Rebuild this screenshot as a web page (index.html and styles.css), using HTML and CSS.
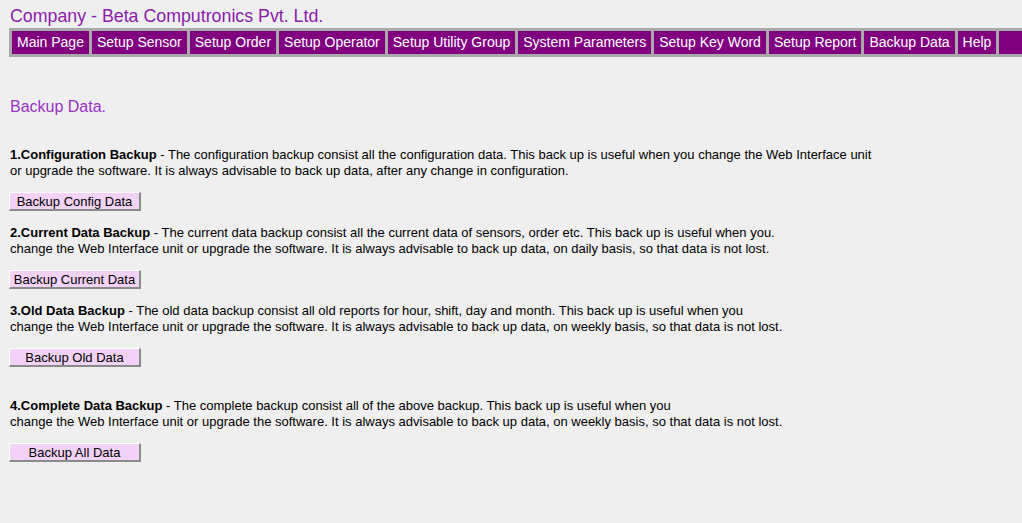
FILE: index.html
```html
<!DOCTYPE html>
<html>
<head>
<meta charset="utf-8">
<title>Backup Data</title>
<link rel="stylesheet" href="styles.css">
</head>
<body>
<div class="page">
  <div class="company">Company - Beta Computronics Pvt. Ltd.</div>
  <nav class="menu">
    <a class="menu-item">Main Page</a>
    <a class="menu-item">Setup Sensor</a>
    <a class="menu-item">Setup Order</a>
    <a class="menu-item">Setup Operator</a>
    <a class="menu-item">Setup Utility Group</a>
    <a class="menu-item">System Parameters</a>
    <a class="menu-item">Setup Key Word</a>
    <a class="menu-item">Setup Report</a>
    <a class="menu-item">Backup Data</a>
    <a class="menu-item">Help</a>
    <span class="menu-item menu-fill"></span>
  </nav>

  <h1 class="heading">Backup Data.</h1>

  <section class="block first">
    <p class="desc"><b>1.Configuration Backup</b> - The configuration backup consist all the configuration data. This back up is useful when you change the Web Interface unit<br>or upgrade the software. It is always advisable to back up data, after any change in configuration.</p>
    <button class="btn">Backup Config Data</button>
  </section>

  <section class="block">
    <p class="desc"><b>2.Current Data Backup</b> - The current data backup consist all the current data of sensors, order etc. This back up is useful when you.<br>change the Web Interface unit or upgrade the software. It is always advisable to back up data, on daily basis, so that data is not lost.</p>
    <button class="btn">Backup Current Data</button>
  </section>

  <section class="block">
    <p class="desc"><b>3.Old Data Backup</b> - The old data backup consist all old reports for hour, shift, day and month. This back up is useful when you<br>change the Web Interface unit or upgrade the software. It is always advisable to back up data, on weekly basis, so that data is not lost.</p>
    <button class="btn">Backup Old Data</button>
  </section>

  <section class="block spaced">
    <p class="desc"><b>4.Complete Data Backup</b> - The complete backup consist all of the above backup. This back up is useful when you<br>change the Web Interface unit or upgrade the software. It is always advisable to back up data, on weekly basis, so that data is not lost.</p>
    <button class="btn">Backup All Data</button>
  </section>
</div>
</body>
</html>
```

FILE: styles.css
```css
html, body {
  margin: 0;
  padding: 0;
  background: #efefef;
  overflow: hidden;
}
body {
  font-family: "Liberation Sans", Arial, sans-serif;
  color: #000;
}
.page {
  padding: 6px 0 0 9px;
}
.company {
  font-size: 17.8px;
  line-height: 20px;
  color: #8a1cac;
  padding-left: 1px;
}
.menu {
  display: flex;
  gap: 3px;
  margin-top: 2px;
  padding: 3px;
  background: #a9a9a9;
  width: 1040px;
  box-sizing: border-box;
}
.menu-item {
  background: #800080;
  color: #ffffff;
  font-size: 14px;
  line-height: 23px;
  height: 23px;
  padding: 0 5px;
  white-space: nowrap;
  text-decoration: none;
}
.menu-fill {
  flex: 1;
}
.heading {
  font-size: 16px;
  font-weight: normal;
  line-height: 18px;
  color: #9932c4;
  margin: 41px 0 0 1px;
}
.block {
  margin-top: 14px;
}
.block.first {
  margin-top: 31px;
}
.block.spaced {
  margin-top: 31px;
}
.desc {
  margin: 0 0 0 1px;
  font-size: 13px;
  line-height: 16px;
}
.desc b {
  font-weight: bold;
}
.btn {
  display: block;
  margin-top: 13px;
  width: 132px;
  height: 19px;
  padding: 0;
  font-family: "Liberation Sans", Arial, sans-serif;
  font-size: 13px;
  line-height: 15px;
  color: #000;
  background: #f2d2f7;
  border: 2px solid;
  border-color: #ffffff #8a8a8a #8a8a8a #ffffff;
  border-width: 1px 2px 2px 1px;
}
```
